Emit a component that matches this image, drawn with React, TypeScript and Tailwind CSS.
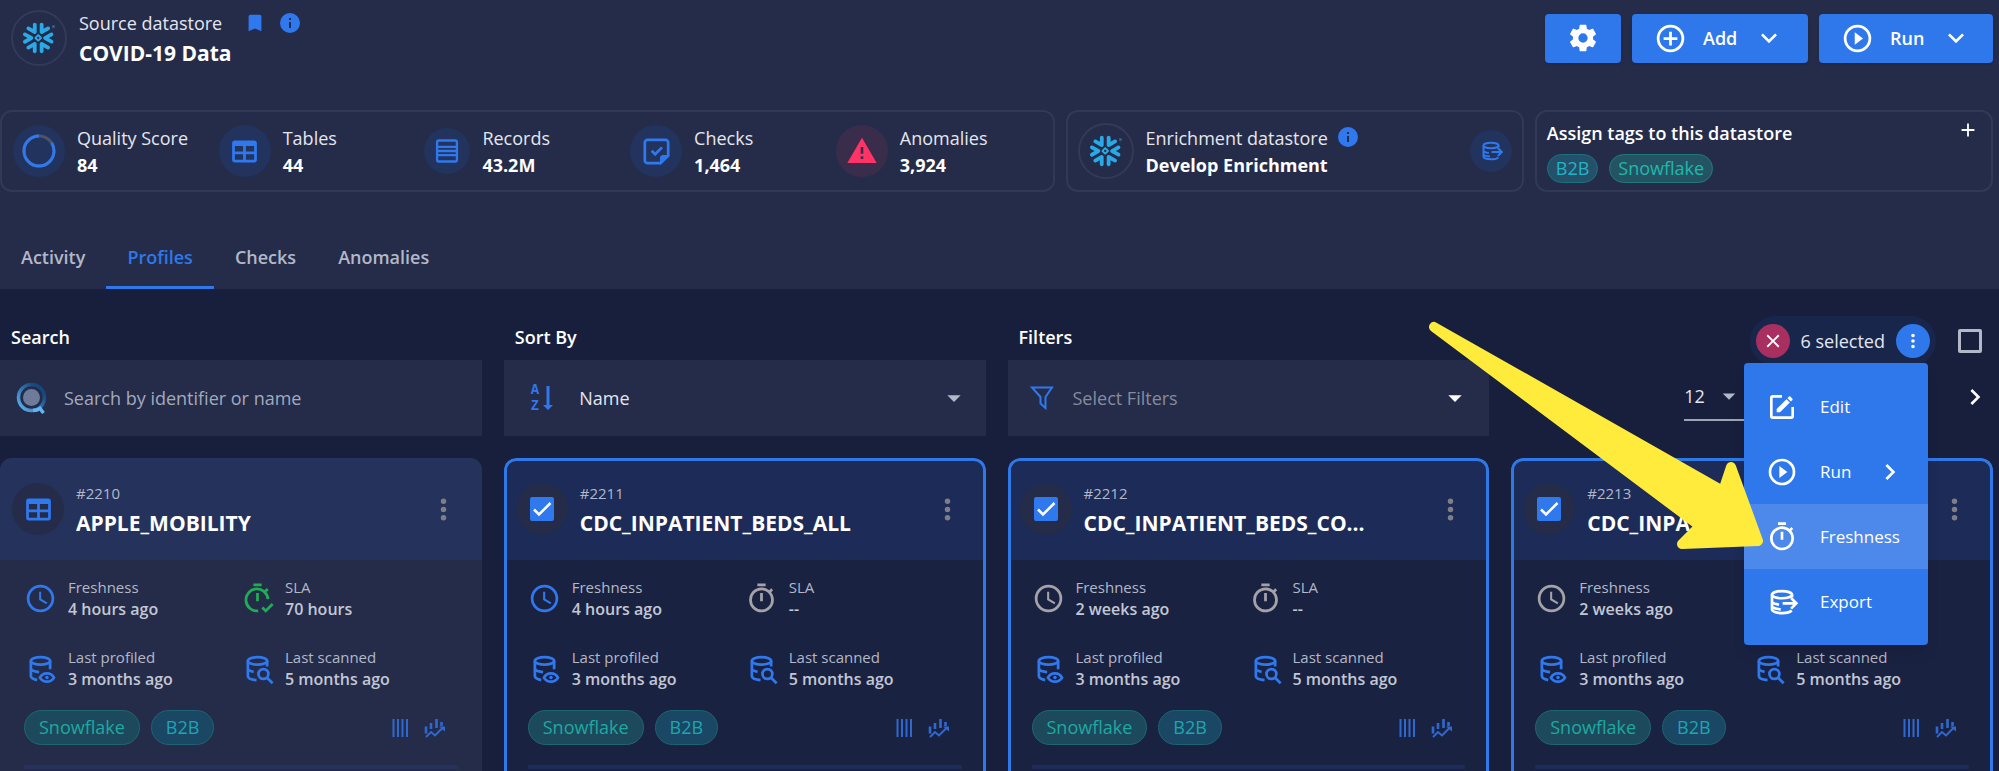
import React from 'react';
import { SiSnowflake } from 'react-icons/si';

const paths = {
  bookmark: 'M17,3H7A2,2 0 0,0 5,5V21L12,18L19,21V5C19,3.89 18.1,3 17,3Z',
  info: 'M13,9H11V7H13M13,17H11V11H13M12,2A10,10 0 0,0 2,12A10,10 0 0,0 12,22A10,10 0 0,0 22,12A10,10 0 0,0 12,2Z',
  cog: 'M12,15.5A3.5,3.5 0 0,1 8.5,12A3.5,3.5 0 0,1 12,8.5A3.5,3.5 0 0,1 15.5,12A3.5,3.5 0 0,1 12,15.5M19.43,12.97C19.47,12.65 19.5,12.33 19.5,12C19.5,11.67 19.47,11.34 19.43,11L21.54,9.37C21.73,9.22 21.78,8.95 21.66,8.73L19.66,5.27C19.54,5.05 19.27,4.96 19.05,5.05L16.56,6.05C16.04,5.66 15.5,5.32 14.87,5.07L14.5,2.42C14.46,2.18 14.25,2 14,2H10C9.75,2 9.54,2.18 9.5,2.42L9.13,5.07C8.5,5.32 7.96,5.66 7.44,6.05L4.95,5.05C4.73,4.96 4.46,5.05 4.34,5.27L2.34,8.73C2.21,8.95 2.27,9.22 2.46,9.37L4.57,11C4.53,11.34 4.5,11.67 4.5,12C4.5,12.33 4.53,12.65 4.57,12.97L2.46,14.63C2.27,14.78 2.21,15.05 2.34,15.27L4.34,18.73C4.46,18.95 4.73,19.03 4.95,18.95L7.44,17.94C7.96,18.34 8.5,18.68 9.13,18.93L9.5,21.58C9.54,21.82 9.75,22 10,22H14C14.25,22 14.46,21.82 14.5,21.58L14.87,18.93C15.5,18.67 16.04,18.34 16.56,17.94L19.05,18.95C19.27,19.03 19.54,18.95 19.66,18.73L21.66,15.27C21.78,15.05 21.73,14.78 21.54,14.63L19.43,12.97Z',
  plusCircle: 'M12,20C7.59,20 4,16.41 4,12C4,7.59 7.59,4 12,4C16.41,4 20,7.59 20,12C20,16.41 16.41,20 12,20M12,2A10,10 0 0,0 2,12A10,10 0 0,0 12,22A10,10 0 0,0 22,12A10,10 0 0,0 12,2M13,7H11V11H7V13H11V17H13V13H17V11H13V7Z',
  playCircle: 'M12,20C7.59,20 4,16.41 4,12C4,7.59 7.59,4 12,4C16.41,4 20,7.59 20,12C20,16.41 16.41,20 12,20M12,2A10,10 0 0,0 2,12A10,10 0 0,0 12,22A10,10 0 0,0 22,12A10,10 0 0,0 12,2M10,16.5L16,12L10,7.5V16.5Z',
  chevronDown: 'M7.41,8.58L12,13.17L16.59,8.58L18,10L12,16L6,10L7.41,8.58Z',
  chevronRight: 'M8.59,16.58L13.17,12L8.59,7.41L10,6L16,12L10,18L8.59,16.58Z',
  menuDown: 'M7,10L12,15L17,10H7Z',
  plus: 'M19,13H13V19H11V13H5V11H11V5H13V11H19V13Z',
  close: 'M19,6.41L17.59,5L12,10.59L6.41,5L5,6.41L10.59,12L5,17.59L6.41,19L12,13.41L17.59,19L19,17.59L13.41,12L19,6.41Z',
  dots: 'M12,16A2,2 0 0,1 14,18A2,2 0 0,1 12,20A2,2 0 0,1 10,18A2,2 0 0,1 12,16M12,10A2,2 0 0,1 14,12A2,2 0 0,1 12,14A2,2 0 0,1 10,12A2,2 0 0,1 12,10M12,4A2,2 0 0,1 14,6A2,2 0 0,1 12,8A2,2 0 0,1 10,6A2,2 0 0,1 12,4Z',
  alert: 'M13 14H11V9H13M13 18H11V16H13M1 21H23L12 2L1 21Z',
  table: 'M5,4H19A2,2 0 0,1 21,6V18A2,2 0 0,1 19,20H5A2,2 0 0,1 3,18V6A2,2 0 0,1 5,4M5,8V12H11V8H5M13,8V12H19V8H13M5,14V18H11V14H5M13,14V18H19V14H13Z',
  clock: 'M12,20A8,8 0 0,0 20,12A8,8 0 0,0 12,4A8,8 0 0,0 4,12A8,8 0 0,0 12,20M12,2A10,10 0 0,1 22,12A10,10 0 0,1 12,22C6.47,22 2,17.5 2,12A10,10 0 0,1 12,2M12.5,7V12.25L17,14.92L16.25,16.15L11,13V7H12.5Z',
  timer: 'M12,20A7,7 0 0,1 5,13A7,7 0 0,1 12,6A7,7 0 0,1 19,13A7,7 0 0,1 12,20M19.03,7.39L20.45,5.97C20,5.46 19.55,5 19.04,4.56L17.62,6C16.07,4.74 14.12,4 12,4A9,9 0 0,0 3,13A9,9 0 0,0 12,22C17,22 21,17.97 21,13C21,10.88 20.26,8.93 19.03,7.39M11,14H13V8H11M15,1H9V3H15V1Z',
  edit: 'M5,3C3.89,3 3,3.89 3,5V19A2,2 0 0,0 5,21H19A2,2 0 0,0 21,19V12H19V19H5V5H12V3H5M17.78,4C17.61,4 17.43,4.07 17.3,4.2L16.08,5.41L18.58,7.91L19.8,6.7C20.06,6.44 20.06,6 19.8,5.75L18.25,4.2C18.12,4.07 17.95,4 17.78,4M15.37,6.12L8,13.5V16H10.5L17.87,8.62L15.37,6.12Z',
};

function Icon({ name, className = '' }: { name: keyof typeof paths; className?: string }) {
  return (
    <svg viewBox="0 0 24 24" fill="currentColor" className={`shrink-0 ${className}`} aria-hidden="true">
      <path d={paths[name]} />
    </svg>
  );
}

function Line({ className = '', children }: { className?: string; children: React.ReactNode }) {
  return (
    <svg viewBox="0 0 24 24" fill="none" stroke="currentColor" strokeWidth="2" className={`shrink-0 ${className}`} aria-hidden="true">
      {children}
    </svg>
  );
}

const ProfiledIcon = () => (
  <Line className="size-[33px] text-[#2f78ee]">
    <ellipse cx="12" cy="6.5" rx="7" ry="2.7" />
    <path d="M5 6.5v11c0 1.4 2 2.4 4.6 2.9M19 6.5v6M5 11.8c0 1.4 2.4 2.5 6 2.8" />
    <path d="M11.6 18.6c1-1.8 2.9-3 5.1-3s4.1 1.2 5.1 3c-1 1.8-2.9 3-5.1 3s-4.1-1.2-5.1-3Z" />
    <circle cx="16.7" cy="18.6" r="1.3" fill="currentColor" stroke="none" />
  </Line>
);

const ScannedIcon = () => (
  <Line className="size-[33px] text-[#2f78ee]">
    <ellipse cx="12" cy="6.5" rx="7" ry="2.7" />
    <path d="M5 6.5v11c0 1.6 2.4 2.7 6.3 3M19 6.5v4M5 11.8c0 1.2 1.6 2.1 4.2 2.6" />
    <circle cx="16.3" cy="16" r="3.6" />
    <path d="M19 18.7l4 4" />
  </Line>
);

const ExportIcon = ({ className = '' }: { className?: string }) => (
  <Line className={className}>
    <ellipse cx="12" cy="6.5" rx="7.5" ry="2.7" />
    <path d="M4.5 6.5v11c0 1.5 3 2.8 7.5 2.8 3.6 0 6.3-.8 7.2-2M4.5 11.5c0 1.2 2 2.1 5.3 2.5M4.5 15c0 1.2 2.5 2.2 6.5 2.5M19.5 6.5v2" />
    <path d="M12.5 13h10M18.8 9l4 4-4 4" />
  </Line>
);

const TimerCheckIcon = () => (
  <Line className="size-[33px] text-[#1fae54]">
    <path d="M19.6 12.5a8 8 0 1 0-7.1 8.5M9 2h6M12 8v6M17.5 6.8l2-1.6" />
    <path d="M15.5 18.5l2.5 2.5 5-5" />
  </Line>
);

const RecordsIcon = () => (
  <Line className="size-7 text-[#2f78ee]">
    <rect x="3.5" y="3" width="17" height="18" rx="1.5" />
    <path d="M3.5 8.5h17M3.5 12h17M3.5 15.5h17" />
  </Line>
);

const ChecksIcon = () => (
  <Line className="size-[33px] text-[#2f78ee]">
    <path d="M20.5 15V5.5a2 2 0 0 0-2-2h-13a2 2 0 0 0-2 2v13a2 2 0 0 0 2 2H15l5.5-5.5Z" />
    <path d="M15 20.5v-3.5a2 2 0 0 1 2-2h3.5l-5.5 5.5Z" fill="currentColor" strokeWidth="1" />
    <path d="M8.5 11.5l2.5 2.5 5-5" />
  </Line>
);

const ScoreRing = () => (
  <svg viewBox="0 0 36 36" fill="none" strokeWidth="3" className="size-9 -rotate-90" aria-hidden="true">
    <circle cx="18" cy="18" r="15" stroke="#4c5468" />
    <circle cx="18" cy="18" r="15" stroke="#2f78ee" pathLength="100" strokeDasharray="84 100" transform="matrix(1 0 0 -1 0 36)" />
  </svg>
);

const SearchLogo = () => (
  <svg viewBox="0 0 32 32" fill="none" className="size-8" aria-hidden="true">
    <defs>
      <linearGradient id="ring" x1="1" y1="0" x2="0" y2="1">
        <stop offset="0.2" stopColor="#15487e" />
        <stop offset="1" stopColor="#62b5f5" />
      </linearGradient>
    </defs>
    <circle cx="15.5" cy="15.5" r="8.5" fill="#6e7b9a" />
    <circle cx="15.5" cy="15.5" r="13" stroke="url(#ring)" strokeWidth="3.5" />
    <path d="M17 28.5c3 0 5-.6 7-2l3.5 4.5" stroke="#62b5f5" strokeWidth="3.5" />
  </svg>
);

const SortIcon = () => (
  <span className="flex items-center gap-1 text-[#2f78ee]" aria-hidden="true">
    <span className="flex flex-col font-['Liberation_Mono',monospace] text-[14px] leading-4 font-bold">
      <span>A</span>
      <span>Z</span>
    </span>
    <svg viewBox="0 0 10 26" fill="currentColor" className="h-[26px] w-[10px]">
      <path d="M3.5 1h3v19H10l-5 5-5-5h3.5Z" />
    </svg>
  </span>
);

function Snowflake() {
  return (
    <span className="grid size-14 shrink-0 place-items-center rounded-full border-2 border-[#323a58]">
      <SiSnowflake className="size-8 text-[#29a9e8]" aria-hidden="true" />
    </span>
  );
}

const stats = [
  { label: 'Quality Score', value: '84', icon: <ScoreRing />, circle: 'size-[52px] bg-[#22335d]' },
  { label: 'Tables', value: '44', icon: <Icon name="table" className="size-[33px] text-[#2f78ee]" />, circle: 'size-[52px] bg-[#22335d]' },
  { label: 'Records', value: '43.2M', icon: <RecordsIcon />, circle: 'size-[46px] bg-[#22335d]' },
  { label: 'Checks', value: '1,464', icon: <ChecksIcon />, circle: 'size-[52px] bg-[#22335d]' },
  { label: 'Anomalies', value: '3,924', icon: <Icon name="alert" className="size-8 text-[#ff3366]" />, circle: 'size-[52px] bg-[#3a2d4c]' },
];

const profiles = [
  { id: '#2210', name: 'APPLE_MOBILITY', freshness: '4 hours ago', sla: '70 hours', selected: false },
  { id: '#2211', name: 'CDC_INPATIENT_BEDS_ALL', freshness: '4 hours ago', sla: '--', selected: true },
  { id: '#2212', name: 'CDC_INPATIENT_BEDS_CO...', freshness: '2 weeks ago', sla: '--', selected: true },
  { id: '#2213', name: 'CDC_INPATIENT', freshness: '2 weeks ago', sla: '--', selected: true },
];

type Profile = (typeof profiles)[number];

const tabs = ['Activity', 'Profiles', 'Checks', 'Anomalies'];

function Metric({ icon, label, value }: { icon: React.ReactNode; label: string; value: string }) {
  return (
    <div className="flex items-center gap-[11px]">
      {icon}
      <div className="leading-[22px] text-[#b3b8c8]">
        <p className="text-[15px]">{label}</p>
        <p className="text-[16px] font-semibold text-[#c3c7d4]">{value}</p>
      </div>
    </div>
  );
}

function ProfileCard({ profile }: { profile: Profile }) {
  const { selected } = profile;
  return (
    <article className={`relative flex flex-col overflow-hidden rounded-t-xl ${selected ? 'bg-[#1a2242]' : 'bg-[#242c4a]'}`}>
      <div className={`flex h-[102px] items-center gap-3 pr-[22px] pl-3 ${selected ? 'bg-[#1c2b57]' : 'bg-[#25325b]'}`}>
        <span className="grid size-[52px] shrink-0 place-items-center rounded-full bg-[#242c4a]">
          {selected ? (
            <label className="grid place-items-center">
              <input type="checkbox" defaultChecked aria-label={`Select ${profile.name}`} className="col-start-1 row-start-1 size-6 appearance-none rounded-xs bg-[#2f78ee]" />
              <svg viewBox="0 0 24 24" fill="none" stroke="white" strokeWidth="2.5" className="pointer-events-none col-start-1 row-start-1 size-6" aria-hidden="true">
                <path d="M4 12.5l5 5L20.5 6" />
              </svg>
            </label>
          ) : (
            <Icon name="table" className="size-[33px] text-[#2f78ee]" />
          )}
        </span>
        <div className="min-w-0 flex-1 pt-[2px]">
          <p className="text-[15px] leading-6 font-medium text-[#b3b8c8]">{profile.id}</p>
          <h2 className="mt-[2px] truncate text-[21px] leading-8 font-bold text-white">{profile.name}</h2>
        </div>
        <button type="button" aria-label={`Actions for ${profile.name}`} className="text-[#7e7f86]">
          <Icon name="dots" className="size-[33px]" />
        </button>
      </div>

      <div className="grid grid-cols-[217px_1fr] gap-y-[26px] pt-4 pl-6">
        <Metric icon={<Icon name="clock" className={profile.freshness === '4 hours ago' ? 'size-[33px] text-[#2f78ee]' : 'size-[33px] text-[#a5a3a8]'} />} label="Freshness" value={profile.freshness} />
        <Metric icon={profile.sla === '--' ? <Icon name="timer" className="size-[33px] text-[#a5a3a8]" /> : <TimerCheckIcon />} label="SLA" value={profile.sla} />
        <Metric icon={<ProfiledIcon />} label="Last profiled" value="3 months ago" />
        <Metric icon={<ScannedIcon />} label="Last scanned" value="5 months ago" />
      </div>

      <div className="mt-5 flex items-center pr-9 pl-6 text-[18px] leading-8">
        <span className="h-[35px] rounded-full border border-[#1f6670] bg-[#1c4a5c] px-[14px] text-[#1fa8a0]">Snowflake</span>
        <span className="ml-[11px] h-[35px] rounded-full border border-[#1c6373] bg-[#1a4763] px-[14px] text-[#1ea4b4]">B2B</span>
        <svg viewBox="0 0 16 20" stroke="#2f69cf" strokeWidth="2" className="ml-auto h-5 w-4" aria-hidden="true">
          <path d="M1.5 1v18M6 1v18M10.5 1v18M15 1v18" />
        </svg>
        <svg viewBox="0 0 22 22" fill="none" stroke="#2f69cf" strokeWidth="2" className="ml-4 size-[22px]" aria-hidden="true">
          <path d="M2 9.5v7M7 6v6M12.5 2v9M17.5 5v4" strokeWidth="2.6" />
          <path d="M2 20l5-5 4 3.5 8-8" />
          <path d="M15 9.5h6v5Z" fill="#2f69cf" stroke="none" />
        </svg>
      </div>
      <div className={`mx-6 mt-5 h-1 ${selected ? 'bg-[#1c2b57]' : 'bg-[#25325b]'}`} />
      {selected && <div className="pointer-events-none absolute inset-0 rounded-t-xl border-[3px] border-b-0 border-[#2f78e8]" />}
    </article>
  );
}

function SelectionMenu() {
  return (
    <div className="absolute top-[47px] right-2 z-10 w-[184px] rounded-sm bg-[#2f78eb] py-[11px] text-[17px] text-white shadow-lg" role="menu">
      <button type="button" role="menuitem" className="flex h-[65px] w-full items-center gap-[22px] px-[22px]">
        <Icon name="edit" className="size-8" />
        Edit
      </button>
      <button type="button" role="menuitem" className="flex h-[65px] w-full items-center gap-[22px] px-[22px]">
        <Icon name="playCircle" className="size-8" />
        Run
        <Icon name="chevronRight" className="ml-auto size-8" />
      </button>
      <button type="button" role="menuitem" className="flex h-[65px] w-full items-center gap-[22px] bg-[#4d89ea] px-[22px]">
        <Icon name="timer" className="size-8" />
        Freshness
      </button>
      <button type="button" role="menuitem" className="flex h-[65px] w-full items-center gap-[22px] px-[22px]">
        <ExportIcon className="size-8" />
        Export
      </button>
      <svg viewBox="0 0 340 230" fill="#ffeb3b" stroke="#ffeb3b" strokeWidth="10" strokeLinejoin="round" className="pointer-events-none absolute top-[-43px] right-[163px] h-[230px] w-[340px]" aria-hidden="true">
        <path d="M9 7L298 171L306 147L333 221L257 224L275 206Z" />
      </svg>
    </div>
  );
}

export default function App() {
  return (
    <div className="flex min-h-screen flex-col overflow-x-hidden bg-[#171f3d] font-['Open_Sans','Noto_Sans',sans-serif] text-[18px] text-[#e4e6ee]">
      <header className="bg-[#242c4a] pr-[6px]">
        <div className="flex items-center pt-2">
          <div className="flex items-center gap-3 pl-[11px]">
            <Snowflake />
            <div className="leading-[30px]">
              <p className="flex items-center">
                Source datastore
                <Icon name="bookmark" className="ml-[22px] size-[22px] text-[#2f78ee]" />
                <Icon name="info" className="ml-3 size-6 text-[#2f78ee]" />
              </p>
              <h1 className="text-[21px] font-bold text-white">COVID-19 Data</h1>
            </div>
          </div>
          <div className="ml-auto flex gap-[11px] font-semibold text-white">
            <button type="button" aria-label="Settings" className="grid h-[49px] w-[76px] place-items-center rounded-sm bg-[#2f78eb] shadow">
              <Icon name="cog" className="size-8" />
            </button>
            <button type="button" className="flex h-[49px] w-44 items-center rounded-sm bg-[#2f78eb] pl-[22px] shadow">
              <Icon name="plusCircle" className="size-[33px]" />
              <span className="ml-4">Add</span>
              <Icon name="chevronDown" className="ml-4 size-8" />
            </button>
            <button type="button" className="flex h-[49px] w-[174px] items-center rounded-sm bg-[#2f78eb] pl-[22px] shadow">
              <Icon name="playCircle" className="size-[33px]" />
              <span className="ml-4">Run</span>
              <Icon name="chevronDown" className="ml-4 size-8" />
            </button>
          </div>
        </div>

        <div className="mt-[42px] grid grid-cols-[1054fr_458fr_458fr] gap-[11px]">
          <section className="grid h-[82px] grid-cols-5 items-center rounded-xl border-2 border-[#313957] px-[11px]">
            {stats.map((s) => (
              <div key={s.label} className="flex items-center gap-3">
                <span className={`grid shrink-0 place-items-center rounded-full ${s.circle}`}>{s.icon}</span>
                <div className="pt-[2px] leading-[27px]">
                  <p>{s.label}</p>
                  <p className="font-bold text-white">{s.value}</p>
                </div>
              </div>
            ))}
          </section>

          <section className="flex h-[82px] items-center gap-3 rounded-xl border-2 border-[#313957] px-[10px]">
            <Snowflake />
            <div className="pt-[2px] leading-[27px]">
              <p className="flex items-start">
                Enrichment datastore
                <Icon name="info" className="ml-2 size-6 text-[#2f78ee]" />
              </p>
              <p className="font-bold text-white">Develop Enrichment</p>
            </div>
            <button type="button" aria-label="Export" className="ml-auto grid size-[42px] place-items-center rounded-full bg-[#22335d] text-[#2f78ee]">
              <ExportIcon className="size-6" />
            </button>
          </section>

          <section className="flex h-[82px] justify-between rounded-xl border-2 border-[#313957] pt-[7px] pr-3 pl-[10px]">
            <div>
              <h2 className="leading-7 font-semibold text-white">Assign tags to this datastore</h2>
              <div className="mt-[7px] flex gap-[11px]">
                <span className="h-[29px] rounded-full border border-[#1c7080] bg-[#24506a] px-2 leading-[27px] text-[#1fb5c8]">B2B</span>
                <span className="h-[29px] rounded-full border border-[#1f7a7c] bg-[#245463] px-2 leading-[27px] text-[#20b8ac]">Snowflake</span>
              </div>
            </div>
            <button type="button" aria-label="Add tag" className="size-[22px] self-start text-white">
              <Icon name="plus" className="size-[22px]" />
            </button>
          </section>
        </div>

        <nav className="mt-[33px] flex font-semibold" role="tablist">
          {tabs.map((tab) => (
            <button
              key={tab}
              type="button"
              role="tab"
              aria-selected={tab === 'Profiles'}
              className={`h-16 border-b-[3px] px-[21px] pt-1 ${tab === 'Profiles' ? 'border-[#2f78e8] text-[#2f78e8]' : 'border-transparent text-[#b3b8c8]'}`}
            >
              {tab}
            </button>
          ))}
        </nav>
      </header>

      <main className="flex flex-1 flex-col pr-[6px]">
        <div className="grid grid-cols-4 gap-x-[22px] pt-9">
          <div>
            <label htmlFor="search" className="block pl-[11px] leading-6 font-semibold text-white">Search</label>
            <div className="mt-[11px] flex h-[76px] items-center gap-4 bg-[#242c4a] pl-4">
              <SearchLogo />
              <input id="search" type="text" placeholder="Search by identifier or name" className="flex-1 bg-transparent text-white outline-none placeholder:text-[#a3a9bd]" />
            </div>
          </div>
          <div>
            <label htmlFor="sort" className="block pl-[11px] leading-6 font-semibold text-white">Sort By</label>
            <div className="mt-[11px] flex h-[76px] items-center bg-[#242c4a] pr-4 pl-[27px]">
              <SortIcon />
              <select id="sort" className="ml-[26px] flex-1 appearance-none bg-transparent outline-none">
                <option>Name</option>
              </select>
              <Icon name="menuDown" className="size-8 text-[#b3b8c8]" />
            </div>
          </div>
          <div>
            <label htmlFor="filters" className="block pl-[11px] leading-6 font-semibold text-white">Filters</label>
            <div className="mt-[11px] flex h-[76px] items-center bg-[#242c4a] pr-[18px] pl-[22px]">
              <Line className="size-6 text-[#2f78ee]">
                <path d="M2 1.5h20l-6.5 9.5v11l-5-4.5v-6.5Z" />
              </Line>
              <select id="filters" className="ml-[19px] flex-1 appearance-none bg-transparent text-[#868b9c] outline-none">
                <option>Select Filters</option>
              </select>
              <Icon name="menuDown" className="size-8 text-white" />
            </div>
          </div>
          <div className="-mt-[9px] flex flex-col items-end">
            <div className="flex items-center gap-[22px] pr-[11px]">
              <div className="relative flex h-[50px] items-center gap-[11px] rounded-full bg-[#19264c] px-[6px]">
                <button type="button" aria-label="Clear selection" className="grid size-[34px] place-items-center rounded-full bg-[#a92f60] text-white">
                  <Icon name="close" className="size-[22px]" />
                </button>
                <span>6 selected</span>
                <button type="button" aria-label="Bulk actions" className="grid size-[34px] place-items-center rounded-full bg-[#2f78eb] text-white">
                  <Icon name="dots" className="size-[22px]" />
                </button>
                <SelectionMenu />
              </div>
              <input type="checkbox" aria-label="Select all" className="size-6 appearance-none rounded-xs border-[3px] border-[#b3b8c8]" />
            </div>
            <div className="mt-[7px] flex w-full items-center pr-[2px] pl-[173px]">
              <div className="flex h-12 w-[72px] items-center border-b-2 border-[#9da2b4]">
                <select aria-label="Items per page" className="w-[30px] appearance-none bg-transparent outline-none">
                  <option>12</option>
                </select>
                <Icon name="menuDown" className="size-[30px] text-[#b3b8c8]" />
              </div>
              <button type="button" aria-label="Next page" className="ml-auto text-white">
                <Icon name="chevronRight" className="size-8" />
              </button>
            </div>
          </div>
        </div>

        <div className="mt-[22px] grid flex-1 grid-cols-4 gap-x-[22px]">
          {profiles.map((p) => (
            <ProfileCard key={p.id} profile={p} />
          ))}
        </div>
      </main>
    </div>
  );
}
